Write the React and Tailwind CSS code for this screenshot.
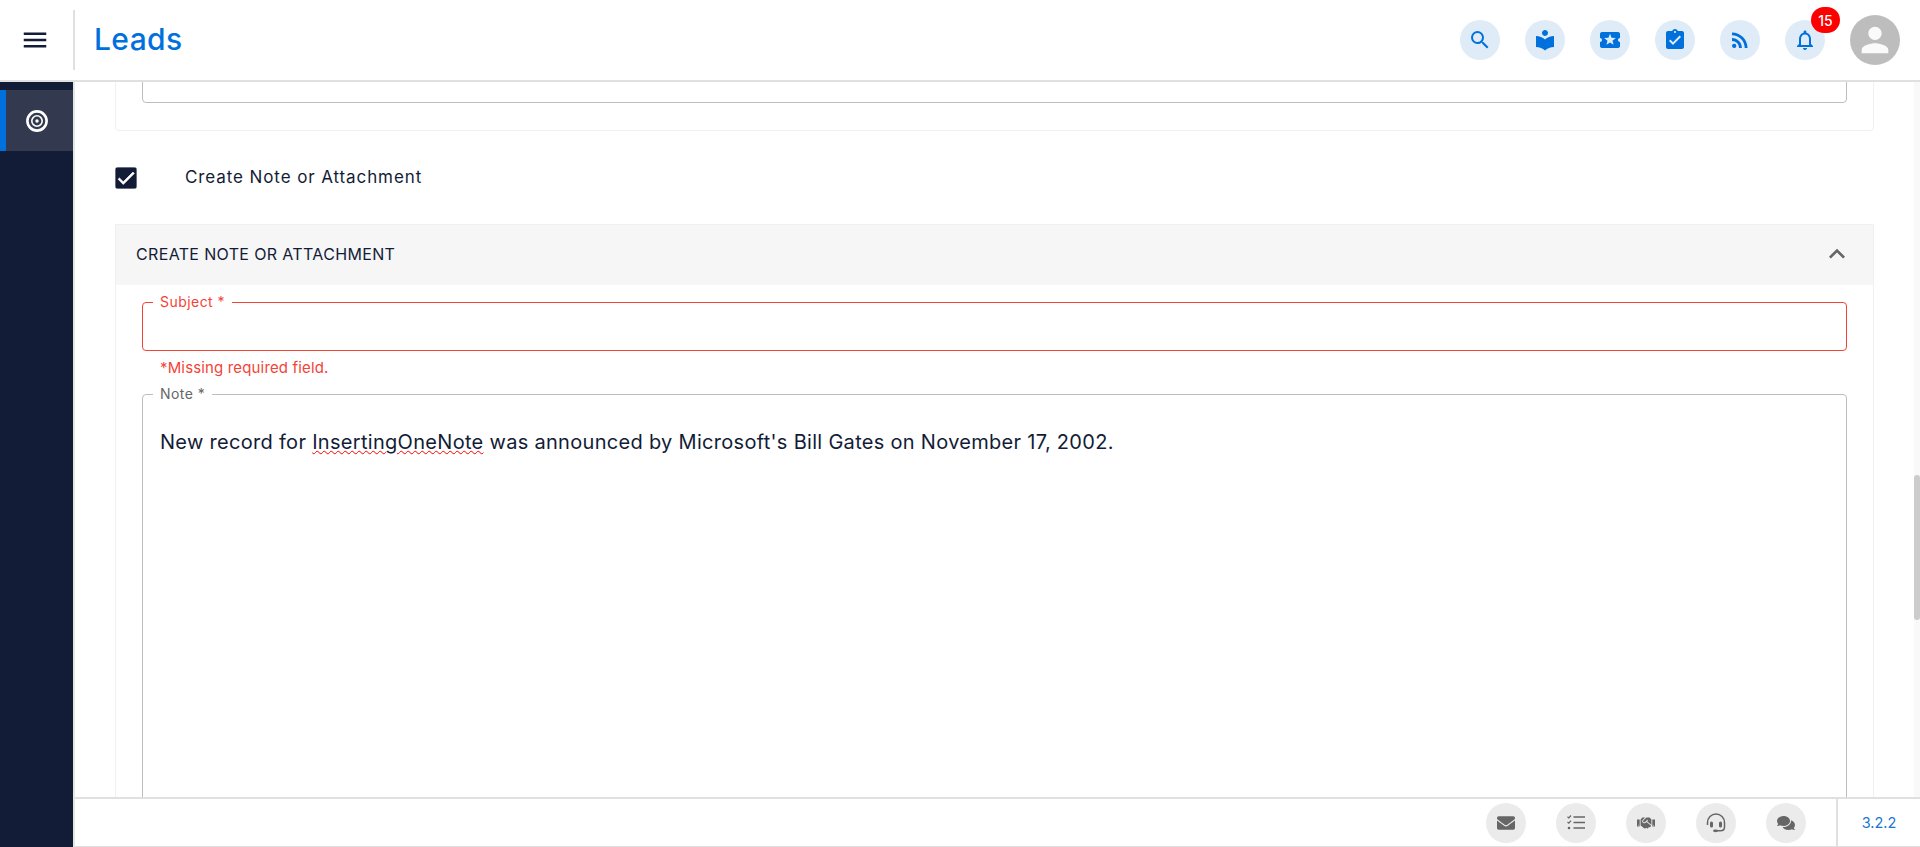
import React, { useLayoutEffect, useRef } from 'react';
import {
  MdMenu,
  MdSearch,
  MdLocalLibrary,
  MdLocalActivity,
  MdAssignmentTurnedIn,
  MdRssFeed,
  MdOutlineNotifications,
  MdPerson,
  MdCheck,
  MdKeyboardArrowUp,
} from 'react-icons/md';
import { FaEnvelope, FaHandshake, FaComments } from 'react-icons/fa';

const TOP_ICONS = [MdSearch, MdLocalLibrary, MdLocalActivity, MdAssignmentTurnedIn, MdRssFeed];

const TopIcon = ({ children }) => (
  <div className="w-10 h-10 rounded-full bg-[#dfecf8] flex items-center justify-center text-[#0071dc]">
    {children}
  </div>
);

const Target = () => (
  <svg width="22" height="22" viewBox="0 0 22 22" fill="none" stroke="white">
    <circle cx="11" cy="11" r="9.6" strokeWidth="2.6" />
    <circle cx="11" cy="11" r="5.2" strokeWidth="1.6" />
    <circle cx="11" cy="11" r="1.7" fill="white" stroke="none" />
  </svg>
);

const TaskList = () => (
  <svg width="18" height="15" viewBox="0 0 18 15" fill="none" stroke="currentColor">
    <path d="M0.5 1.8 L1.8 3 L4 0.5" strokeWidth="1.2" />
    <path d="M0.5 7 L1.8 8.2 L4 5.7" strokeWidth="1.2" />
    <circle cx="2" cy="13" r="1.3" fill="currentColor" stroke="none" />
    <path d="M6.5 2 H18 M6.5 7.5 H18 M6.5 13 H18" strokeWidth="1.6" />
  </svg>
);

const Headset = () => (
  <svg width="20" height="20" viewBox="0 0 20 20" fill="none" stroke="currentColor">
    <path d="M1.5 12 V9.5 a8.5 8.5 0 0 1 17 0 V14 c0 2.5 -2 3.8 -4 3.8 H11" strokeWidth="1.5" />
    <rect x="4" y="8.5" width="3" height="6" rx="1.5" fill="currentColor" stroke="none" />
    <rect x="13" y="8.5" width="3" height="6" rx="1.5" fill="currentColor" stroke="none" />
    <ellipse cx="9.5" cy="17.8" rx="2.5" ry="1.4" fill="currentColor" stroke="none" />
  </svg>
);

const BOTTOM_ICONS = [
  <FaEnvelope size={18} />,
  <TaskList />,
  <FaHandshake size={18} />,
  <Headset />,
  <FaComments size={18} />,
];

const App = () => {
  const scroller = useRef(null);

  // the page is shown scrolled down to the note section
  useLayoutEffect(() => {
    scroller.current.scrollTop = 1938;
  }, []);

  return (
    <div className="h-screen w-full overflow-hidden flex flex-col bg-white text-[#131c37] font-['Inter','Liberation_Sans',sans-serif]">
      {/* Header */}
      <header className="h-[82px] shrink-0 flex items-center border-b-2 border-[#e0e0e0] bg-white">
        <div className="w-[73px] flex items-center justify-center pr-[3px]">
          <MdMenu size={30} />
        </div>
        <div className="w-[2px] h-[60px] bg-[#e0e0e0]" />
        <h1 className="ml-[19px] pb-[2px] text-[30px] font-medium text-[#0071dc] tracking-[0.4px]">Leads</h1>
        <div className="ml-auto flex items-center gap-[25px] pr-[20px]">
          {TOP_ICONS.map((Icon, i) => (
            <TopIcon key={i}>
              <Icon size={24} />
            </TopIcon>
          ))}
          <div className="relative">
            <TopIcon>
              <MdOutlineNotifications size={24} />
            </TopIcon>
            <span className="absolute left-[26px] top-[-13px] w-[29px] h-[26px] rounded-full bg-[#ff0000] text-white text-[14px] font-medium flex items-center justify-center">
              15
            </span>
          </div>
          <div className="w-[50px] h-[50px] rounded-full bg-[#bdbdbd] flex items-center justify-center text-[#fafafa]">
            <MdPerson size={40} />
          </div>
        </div>
      </header>

      <div className="flex-1 min-h-0 flex">
        {/* Sidebar */}
        <aside className="w-[75px] shrink-0 bg-[#131c37] border-r-2 border-[#e5e5e5] pt-2">
          <div className="h-[61px] bg-[#33394f] border-l-[6px] border-[#0071dc] flex items-center justify-center pr-[6px]">
            <Target />
          </div>
        </aside>

        <div className="flex-1 min-w-0 flex flex-col">
          <div className="relative flex-1 min-h-0">
            <main ref={scroller} className="h-full overflow-y-scroll [scrollbar-width:none]">
              <div className="h-[3526px] pt-[1787px] pl-10 pr-[46px]">
                {/* Previous section */}
                <div className="h-[200px] border border-[#f0f0f0] rounded flex flex-col justify-end px-[26px] pb-[27px]">
                  <div className="h-[60px] border border-[#bdbdbd] rounded" />
                </div>

                <div className="mt-9 h-[22px] flex items-center gap-[48px]">
                  <div className="w-[22px] h-[22px] rounded-[3px] bg-[#131c37] flex items-center justify-center text-white">
                    <MdCheck size={22} stroke="currentColor" strokeWidth={0.8} />
                  </div>
                  <span className="text-[17px] tracking-[0.9px]">Create Note or Attachment</span>
                </div>

                {/* Accordion */}
                <section className="mt-[35px] border border-[#f0f0f0]">
                  <div className="h-[60px] bg-[#f6f6f6] flex items-center justify-between pl-5 pr-[20px] pb-[2px]">
                    <h2 className="text-[16px] tracking-[0.35px]">CREATE NOTE OR ATTACHMENT</h2>
                    <MdKeyboardArrowUp size={32} className="text-[#666666]" />
                  </div>
                  <div className="px-[26px] pt-[7px]">
                    <fieldset className="h-[59px] border border-[#f44336] rounded">
                      <legend className="ml-[10px] px-[7px] text-[14px] leading-[20px] text-[#f44336] tracking-[0.45px]">
                        Subject *
                      </legend>
                    </fieldset>
                    <p className="mt-[7px] ml-[18px] text-[15px] leading-[20px] text-[#f44336] tracking-[0.15px]">
                      *Missing required field.
                    </p>
                    <fieldset className="mt-[6px] h-[900px] border border-[#bdbdbd] rounded">
                      <legend className="ml-[10px] px-[7px] text-[14px] leading-[20px] text-[#666666] tracking-[0.45px]">
                        Note *
                      </legend>
                      <p className="mt-[24px] mx-[17px] text-[20px] leading-[28px] tracking-[0.3px]">
                        New record for{' '}
                        <span className="underline decoration-wavy decoration-[#f00] decoration-1">InsertingOneNote</span>{' '}
                        was announced by Microsoft's Bill Gates on November 17, 2002.
                      </p>
                    </fieldset>
                  </div>
                </section>
              </div>
            </main>
            {/* Scrollbar */}
            <div className="absolute right-0 top-0 bottom-0 w-[6px] bg-[#f9f9f9]">
              <div className="mt-[393px] h-[145px] rounded-[3px] bg-[#cccccc]" />
            </div>
          </div>

          {/* Footer */}
          <footer className="h-[50px] shrink-0 flex items-center justify-end border-t-2 border-b border-[#e0e0e0] bg-white">
            <div className="flex items-center gap-[30px] pr-[30px]">
              {BOTTOM_ICONS.map((icon, i) => (
                <div key={i} className="w-10 h-10 rounded-full bg-[#ebebeb] flex items-center justify-center text-[#666666]">
                  {icon}
                </div>
              ))}
            </div>
            <div className="w-[84px] h-full border-l-2 border-[#e0e0e0] flex items-center justify-center text-[14.5px] text-[#1976d2]">
              3.2.2
            </div>
          </footer>
        </div>
      </div>
    </div>
  );
};

export default App;
